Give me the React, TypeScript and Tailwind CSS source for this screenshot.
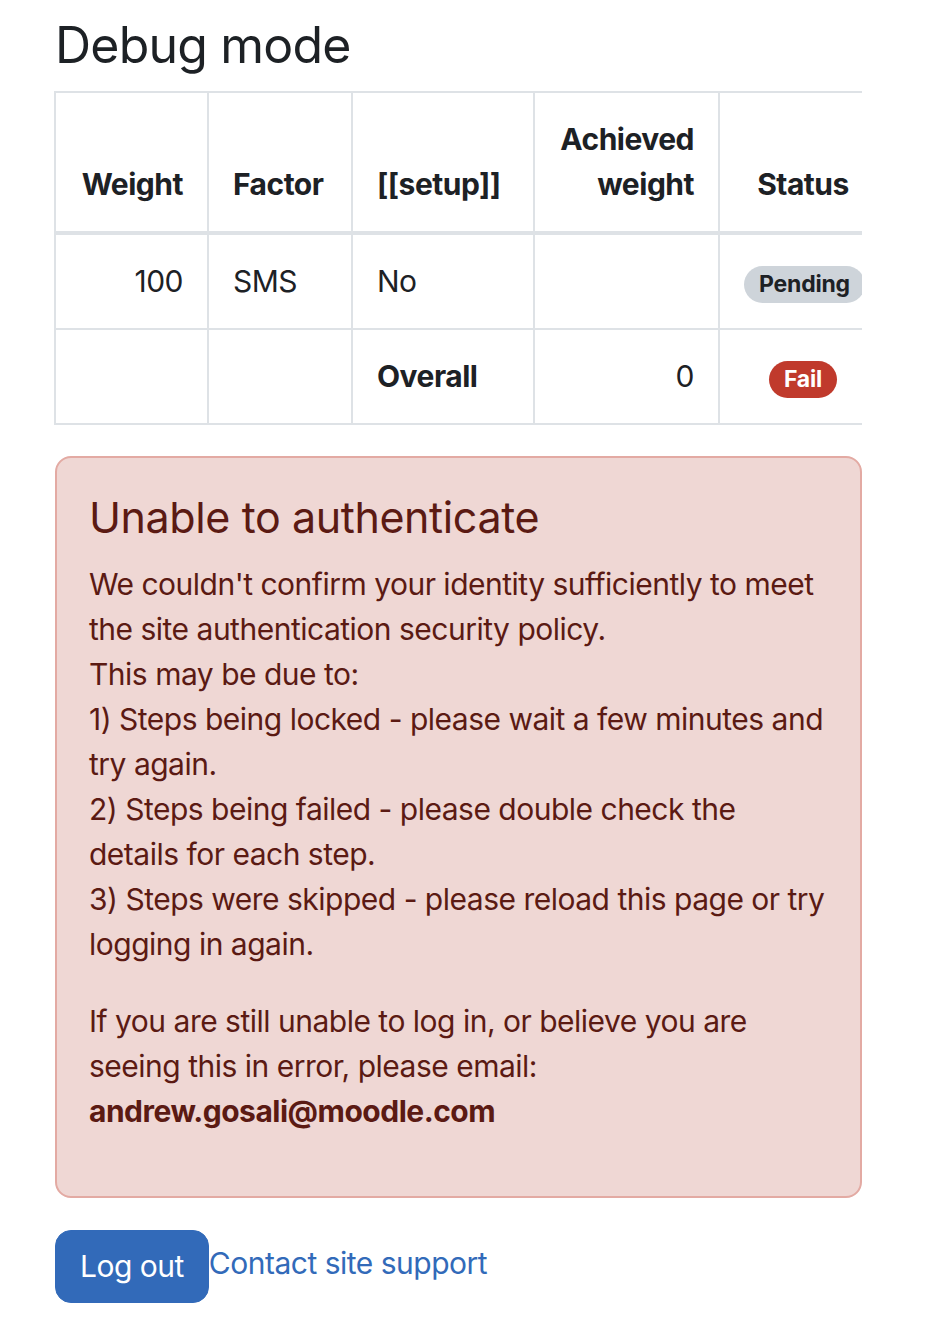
const rows = [
  { weight: '100', factor: 'SMS', setup: 'No', achieved: '', status: 'pending' },
]

function Badge({ kind }: { kind: 'pending' | 'fail' }) {
  if (kind === 'pending') {
    return (
      <span className="inline-block rounded-full bg-[#ced4da] px-[15px] py-[3px] text-[23px] font-bold leading-[31px] tracking-[-0.2px] text-[#1d2125]">
        Pending
      </span>
    )
  }
  return (
    <span className="inline-block rounded-full bg-[#c03a2c] px-[15px] py-[3px] text-[23px] font-bold leading-[31px] tracking-[-0.2px] text-white">
      Fail
    </span>
  )
}

export default function App() {
  const cell = 'border-2 border-[#dee2e6] px-6 py-6'
  const head = 'border-2 border-b-4 border-[#dee2e6] px-6 py-6 align-bottom font-bold'

  return (
    <div className="min-h-screen bg-white pl-[54px] pt-[15px] font-['Inter','Liberation_Sans',sans-serif] text-[30px] leading-[45px] tracking-[-0.5px] text-[#1d2125]">
      <div className="w-[808px]">
        <h3 className="mb-4 pl-[1px] text-[50px] leading-[60px] font-normal tracking-[-0.8px]">Debug mode</h3>

        <div className="overflow-hidden">
          <table className="w-[832px] table-fixed border-collapse">
            <colgroup>
              <col className="w-[153px]" />
              <col className="w-[144px]" />
              <col className="w-[182px]" />
              <col className="w-[185px]" />
              <col className="w-[168px]" />
            </colgroup>
            <thead>
              <tr>
                <th className={`${head} text-right`}>Weight</th>
                <th className={`${head} text-left`}>Factor</th>
                <th className={`${head} text-left`}>[[setup]]</th>
                <th className={`${head} text-right`}>Achieved weight</th>
                <th className={`${head} text-center`}>Status</th>
              </tr>
            </thead>
            <tbody>
              {rows.map((r) => (
                <tr key={r.factor}>
                  <td className={`${cell} text-right`}>{r.weight}</td>
                  <td className={cell}>{r.factor}</td>
                  <td className={cell}>{r.setup}</td>
                  <td className={`${cell} text-right`}>{r.achieved}</td>
                  <td className={`${cell} text-center`}>
                    <Badge kind="pending" />
                  </td>
                </tr>
              ))}
              <tr>
                <td className={cell}></td>
                <td className={cell}></td>
                <td className={`${cell} font-bold`}>Overall</td>
                <td className={`${cell} text-right`}>0</td>
                <td className={`${cell} text-center`}>
                  <Badge kind="fail" />
                </td>
              </tr>
            </tbody>
          </table>
        </div>

        <div className="ml-[1px] mt-[31px] rounded-2xl border-2 border-[#e3aaa3] bg-[#efd7d4] px-8 pt-8 pb-[30px] text-[#5b1a13]">
          <h4 className="mb-[18px] text-[43px] leading-[54px] font-normal tracking-[-0.4px]">Unable to authenticate</h4>
          <p className="mb-8">
            We couldn't confirm your identity sufficiently to meet the site authentication security policy.
            <br />
            This may be due to:
            <br />
            1) Steps being locked - please wait a few minutes and try again.
            <br />
            2) Steps being failed - please double check the details for each step.
            <br />
            3) Steps were skipped - please reload this page or try logging in again.
          </p>
          <p className="mb-8">
            If you are still unable to log in, or believe you are seeing this in error, please email:
            <br />
            <strong className="font-bold">andrew.gosali@moodle.com</strong>
          </p>
        </div>

        <div className="ml-[1px] mt-8 flex items-start">
          <button className="rounded-2xl border border-[#326ab9] bg-[#326ab9] px-6 py-[13px] text-white">
            Log out
          </button>
          <a href="#" className="mt-[11px] text-[#326ab9]">
            Contact site support
          </a>
        </div>
      </div>
    </div>
  )
}
